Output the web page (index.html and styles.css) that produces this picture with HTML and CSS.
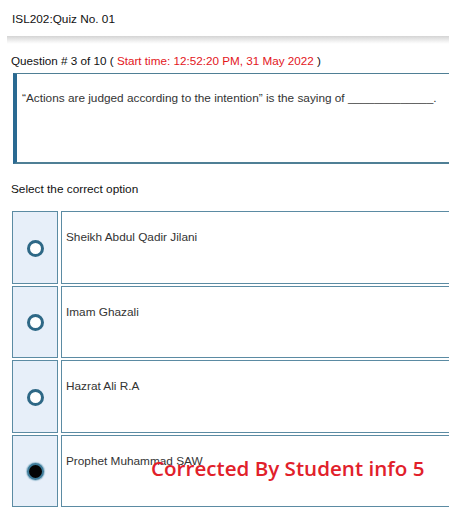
FILE: index.html
```html
<!DOCTYPE html>
<html>
<head>
<meta charset="utf-8">
<link rel="stylesheet" href="styles.css">
</head>
<body>
<div class="page">
  <div class="header">ISL202:Quiz No. 01</div>
  <div class="header-shadow"></div>
  <div class="qtitle">Question # 3 of 10 ( <span class="time">Start time: 12:52:20 PM, 31 May 2022</span> )</div>
  <div class="qbox">“Actions are judged according to the intention” is the saying of _____________.</div>
  <div class="select">Select the correct option</div>
  <div class="options">
    <div class="opt">
      <div class="radio-cell"><span class="radio"></span></div>
      <div class="text-cell">Sheikh Abdul Qadir Jilani</div>
    </div>
    <div class="opt">
      <div class="radio-cell"><span class="radio"></span></div>
      <div class="text-cell">Imam Ghazali</div>
    </div>
    <div class="opt">
      <div class="radio-cell"><span class="radio"></span></div>
      <div class="text-cell">Hazrat Ali R.A</div>
    </div>
    <div class="opt">
      <div class="radio-cell"><span class="radio checked"></span></div>
      <div class="text-cell">Prophet Muhammad SAW</div>
    </div>
    <div class="stamp">Corrected By Student info 5</div>
  </div>
</div>
</body>
</html>
```
FILE: styles.css
```css
html, body {
  margin: 0;
  padding: 0;
  background: #ffffff;
  overflow: hidden;
}
.page {
  width: 470px;
  font-family: "Liberation Sans", Arial, sans-serif;
  color: #222;
  position: relative;
}
.header {
  height: 36px;
  box-sizing: border-box;
  padding: 12px 0 0 12px;
  font-size: 11.8px;
  line-height: 14px;
  color: #111;
}
.header-shadow {
  height: 8px;
  margin-left: 7px;
  background: linear-gradient(#d4d4d4, #f4f4f4 70%, #ffffff);
}
.qtitle {
  padding: 10px 0 0 11px;
  font-size: 11.7px;
  line-height: 14px;
  color: #111;
}
.time {
  color: #e3161c;
}
.qbox {
  margin: 5px 0 0 13px;
  height: 91px;
  box-sizing: border-box;
  border-top: 1px solid #4f7f95;
  border-bottom: 2px solid #4f7f95;
  border-left: 4px solid #2a6a92;
  padding: 17px 0 0 5px;
  font-size: 11.8px;
  line-height: 14px;
  color: #333;
}
.select {
  padding: 18px 0 0 11px;
  font-size: 11.8px;
  line-height: 14px;
  color: #111;
}
.options {
  position: relative;
  margin: 15px 0 0 12px;
  display: flex;
  flex-direction: column;
  gap: 2px;
}
.opt {
  display: flex;
  gap: 3px;
  height: 72.5px;
}
.radio-cell {
  width: 46px;
  box-sizing: border-box;
  border: 1px solid #5b8ba3;
  background: #e7eff9;
  display: flex;
  align-items: center;
  justify-content: center;
  padding-top: 2px;
}
.radio {
  width: 17px;
  height: 17px;
  box-sizing: border-box;
  border-radius: 50%;
  border: 3px solid #2e6886;
  background: #fff;
}
.radio.checked {
  border: 2px solid #3f7c9a;
  background: #050505;
  box-shadow: 0 0 1px 1px #9dbfd2;
}
.text-cell {
  flex: 1;
  box-sizing: border-box;
  border: 1px solid #5b8ba3;
  border-right: none;
  background: #fff;
  padding: 18px 0 0 4px;
  font-size: 11.8px;
  line-height: 14px;
  color: #333;
}
.stamp {
  position: absolute;
  left: 139px;
  top: 245px;
  font-family: "Open Sans", "Liberation Sans", sans-serif;
  font-weight: 600;
  font-size: 20.6px;
  line-height: 24px;
  color: #e1202a;
  white-space: nowrap;
}
```
